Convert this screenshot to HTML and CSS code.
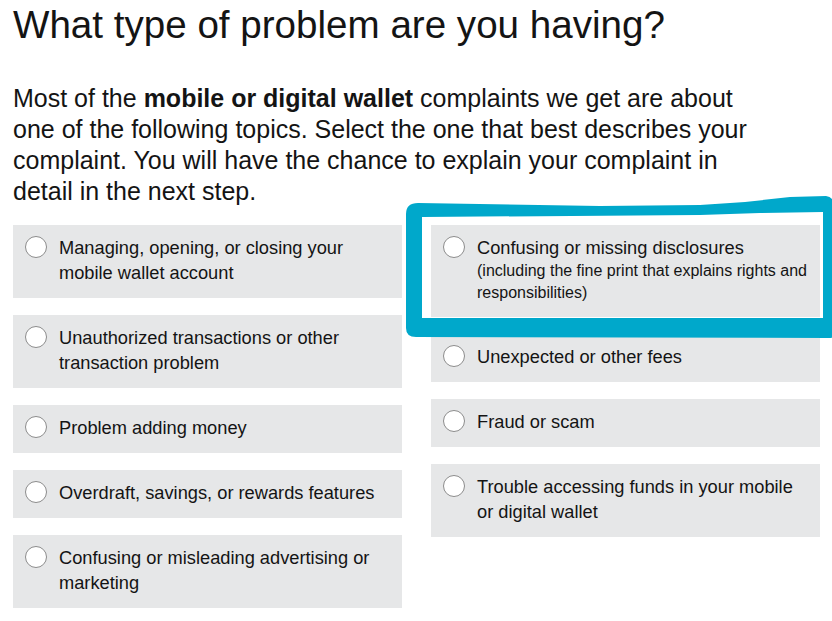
FILE: index.html
```html
<!DOCTYPE html>
<html lang="en">
<head>
<meta charset="utf-8">
<title>What type of problem are you having?</title>
<link rel="stylesheet" href="styles.css">
</head>
<body>
<main class="page">
  <h1 class="title">What type of problem are you having?</h1>
  <p class="intro">Most of the <strong>mobile or digital wallet</strong> complaints we get are about one of the following topics. Select the one that best describes your complaint. You will have the chance to explain your complaint in detail in the next step.</p>
  <div class="options">
    <div class="col">
      <label class="option"><span class="radio"></span><span class="text">Managing, opening, or closing your mobile wallet account</span></label>
      <label class="option"><span class="radio"></span><span class="text">Unauthorized transactions or other transaction problem</span></label>
      <label class="option"><span class="radio"></span><span class="text">Problem adding money</span></label>
      <label class="option"><span class="radio"></span><span class="text">Overdraft, savings, or rewards features</span></label>
      <label class="option"><span class="radio"></span><span class="text">Confusing or misleading advertising or marketing</span></label>
    </div>
    <div class="col">
      <label class="option"><span class="radio"></span><span class="text">Confusing or missing disclosures<span class="sub">(including the fine print that explains rights and responsibilities)</span></span></label>
      <label class="option"><span class="radio"></span><span class="text">Unexpected or other fees</span></label>
      <label class="option"><span class="radio"></span><span class="text">Fraud or scam</span></label>
      <label class="option"><span class="radio"></span><span class="text">Trouble accessing funds in your mobile or digital wallet</span></label>
    </div>
  </div>
  <svg class="highlight" width="432" height="160" viewBox="400 190 432 160" aria-hidden="true">
    <path fill="#00a8cb" fill-rule="evenodd" d="M406,214 Q406,203 418,203 L600,206 L700,205 L745,202 L790,197 L826,196 Q834,197 834,206 L834,336 Q834,338 828,338 L416,337 Q406,337 406,328 Z M422,217 L700,215 L760,213 L823,212 L823,318 L422,318 Z"/>
  </svg>
</main>
</body>
</html>
```

FILE: styles.css
```css
html, body {
  margin: 0;
  padding: 0;
  background: #ffffff;
}

.page {
  position: relative;
  width: 832px;
  height: 621px;
  overflow: hidden;
  padding: 2px 0 0 13px;
  box-sizing: border-box;
  font-family: "Liberation Sans", Arial, sans-serif;
  color: #141414;
}

.title {
  margin: 0;
  font-size: 38.6px;
  font-weight: normal;
  line-height: 46px;
}

.intro {
  margin: 35px 0 0 0;
  width: 765px;
  font-size: 25px;
  line-height: 31px;
}

.intro strong {
  font-weight: bold;
}

.options {
  display: flex;
  gap: 29px;
  margin-top: 18px;
}

.col {
  width: 389px;
  display: flex;
  flex-direction: column;
  gap: 17px;
}

.option {
  display: flex;
  align-items: flex-start;
  gap: 12px;
  background: #e6e7e8;
  padding: 10px 12px 13px 12px;
  font-size: 18.25px;
  line-height: 25px;
}

.radio {
  flex: none;
  width: 20px;
  height: 20px;
  margin-top: 1px;
  border: 1px solid #8c8c8c;
  border-radius: 50%;
  background: #ffffff;
}

.text {
  display: block;
}

.sub {
  display: block;
  font-size: 16px;
  line-height: 22px;
}

.highlight {
  position: absolute;
  left: 400px;
  top: 190px;
}
```
